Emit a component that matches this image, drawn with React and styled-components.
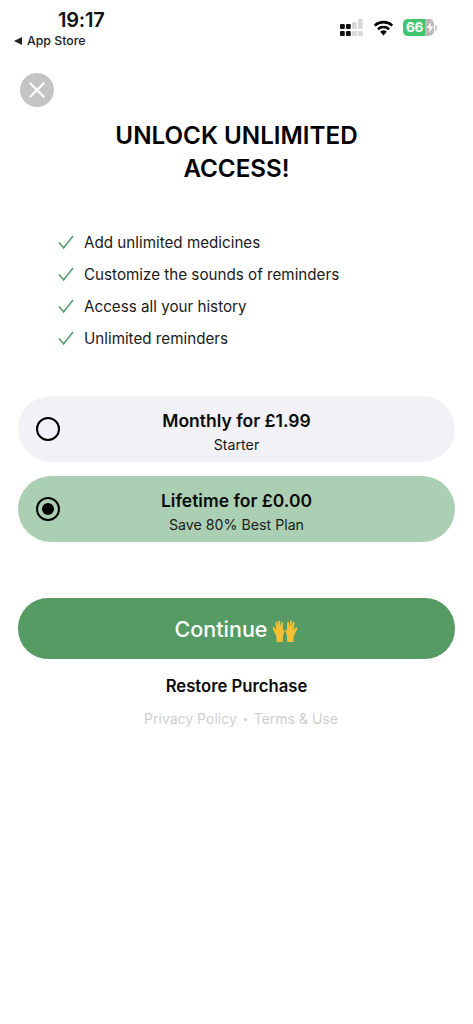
import React from "react";
import styled, { createGlobalStyle } from "styled-components";

const benefits = [
  "Add unlimited medicines",
  "Customize the sounds of reminders",
  "Access all your history",
  "Unlimited reminders",
];

const plans = [
  { title: "Monthly for £1.99", note: "Starter", selected: false },
  { title: "Lifetime for £0.00", note: "Save 80% Best Plan", selected: true },
];

function CellBars() {
  const columns = [0, 6, 12, 18];
  return (
    <svg width="24" height="17" viewBox="0 0 24 17">
      {columns.map((x, i) => (
        <g key={x}>
          {i > 1 && (
            <rect x={x} y={i === 3 ? 0 : 3} width="4.6" height={i === 3 ? 10 : 7} rx="1" fill="#d8d8d8" />
          )}
          {i < 2 && <rect x={x} y="5" width="4.8" height="5" rx="1" fill="#111" />}
          <rect x={x} y="12" width="4.8" height="5" rx="1" fill={i < 2 ? "#111" : "#d8d8d8"} />
        </g>
      ))}
    </svg>
  );
}

function Wifi() {
  return (
    <svg width="21" height="16" viewBox="0 0 21 16">
      <path d="M10.5 15.5 L7.2 11.7 A5 5 0 0 1 13.8 11.7 Z" fill="#000" />
      <path d="M4.9 9.2 A8.4 8.4 0 0 1 16.1 9.2" fill="none" stroke="#000" strokeWidth="2.5" />
      <path d="M1.7 5.6 A13 13 0 0 1 19.3 5.6" fill="none" stroke="#000" strokeWidth="2.6" />
    </svg>
  );
}

function Check() {
  return (
    <svg width="16" height="14" viewBox="0 0 16 14">
      <path d="M1 7.4 L5.6 13 L15 1" fill="none" stroke="#4f9a68" strokeWidth="1.5" />
    </svg>
  );
}

function RaisedHands() {
  return (
    <svg width="26" height="28" viewBox="0 0 26 28">
      <path
        d="M4.6 27 L4.2 21 L0.8 14 Q0.2 12.2 1.8 12 L4.4 15 L3.4 7.6 Q4 6.2 5.2 7 L6.2 12 L6.2 6 Q7 4.8 8 6 L8.4 12 L9.2 7.4 Q10.4 6.6 10.8 8 L11 16 L11.8 14.6 Q12.8 14.8 12.4 16.4 L11 21 L10.8 27 Z"
        fill="#f7c034"
      />
      <path
        d="M21.4 27 L21.8 21 L25.2 14 Q25.8 12.2 24.2 12 L21.6 15 L22.6 7.6 Q22 6.2 20.8 7 L19.8 12 L19.8 6 Q19 4.8 18 6 L17.6 12 L16.8 7.4 Q15.6 6.6 15.2 8 L15 16 L14.2 14.6 Q13.2 14.8 13.6 16.4 L15 21 L15.2 27 Z"
        fill="#f7c034"
      />
      <path d="M8.6 3.4 L8.4 1.8 M12 3 L12 1 M14 3 L14 1 M17.4 3.4 L17.6 1.8" stroke="#6d7f66" strokeWidth="0.9" />
    </svg>
  );
}

export default function App() {
  return (
    <Page>
      <GlobalStyle />
      <StatusBar>
        <StatusLeft>
          <Time>19:17</Time>
          <BackLink>
            <BackArrow />
            App Store
          </BackLink>
        </StatusLeft>
        <StatusRight>
          <CellBars />
          <Wifi />
          <Battery>
            <BatteryBody>
              <BatteryFill>66</BatteryFill>
              <Bolt>
                <svg width="8" height="11" viewBox="0 0 8 11">
                  <path d="M5 0 L0.5 6 H3.5 L2.8 11 L7.5 4.6 H4.4 Z" fill="#fff" />
                </svg>
              </Bolt>
            </BatteryBody>
            <BatteryTip />
          </Battery>
        </StatusRight>
      </StatusBar>

      <CloseButton aria-label="Close">
        <svg width="16" height="16" viewBox="0 0 16 16">
          <path d="M1.5 1.5 L14.5 14.5 M14.5 1.5 L1.5 14.5" stroke="#fff" strokeWidth="2.4" strokeLinecap="round" />
        </svg>
      </CloseButton>

      <Title>
        UNLOCK UNLIMITED
        <br />
        ACCESS!
      </Title>

      <BenefitList>
        {benefits.map((text) => (
          <Benefit key={text}>
            <Check />
            {text}
          </Benefit>
        ))}
      </BenefitList>

      <PlanList>
        {plans.map((plan) => (
          <Plan key={plan.title} $selected={plan.selected}>
            <Radio $selected={plan.selected} />
            <PlanTitle>{plan.title}</PlanTitle>
            <PlanNote>{plan.note}</PlanNote>
          </Plan>
        ))}
      </PlanList>

      <ContinueButton>
        Continue
        <RaisedHands />
      </ContinueButton>

      <Restore>Restore Purchase</Restore>

      <LegalRow>
        <span>Privacy Policy</span>
        <LegalDot />
        <span>Terms &amp; Use</span>
      </LegalRow>
    </Page>
  );
}

const GlobalStyle = createGlobalStyle`
  html, body {
    margin: 0;
    padding: 0;
    background: #fff;
  }
  body {
    font-family: Inter, "Noto Sans", sans-serif;
    color: #000;
  }
`;

const Page = styled.div`
  width: 473px;
  height: 1024px;
  box-sizing: border-box;
  overflow: hidden;
  display: flex;
  flex-direction: column;
  background: #fff;
`;

const StatusBar = styled.div`
  height: 73px;
  box-sizing: border-box;
  padding: 9px 36px 0 14px;
  display: flex;
  justify-content: space-between;
  align-items: flex-start;
  flex-shrink: 0;
`;

const StatusLeft = styled.div`
  display: flex;
  flex-direction: column;
  align-items: flex-start;
`;

const Time = styled.div`
  margin-left: 44px;
  font-size: 20px;
  line-height: 23px;
  font-weight: 600;
  letter-spacing: -0.2px;
  color: #111;
`;

const BackLink = styled.div`
  margin-top: 1px;
  display: flex;
  align-items: center;
  gap: 5px;
  font-size: 12.3px;
  line-height: 16px;
  font-weight: 500;
  color: #222;
`;

const BackArrow = styled.span`
  width: 0;
  height: 0;
  border-top: 4px solid transparent;
  border-bottom: 4px solid transparent;
  border-right: 8px solid #222;
`;

const StatusRight = styled.div`
  margin-top: 10px;
  display: flex;
  align-items: center;
  gap: 9px;
`;

const Battery = styled.div`
  display: flex;
  align-items: center;
  gap: 1px;
`;

const BatteryBody = styled.div`
  width: 31px;
  height: 17px;
  border-radius: 5px;
  overflow: hidden;
  background: #b9b9b9;
  display: flex;
`;

const BatteryFill = styled.div`
  width: 21px;
  padding-left: 1px;
  background: #3fc56b;
  color: #fff;
  font-size: 13.5px;
  line-height: 17px;
  font-weight: 700;
  letter-spacing: -0.2px;
  text-align: center;
`;

const Bolt = styled.div`
  flex: 1;
  display: flex;
  align-items: center;
  justify-content: center;
`;

const BatteryTip = styled.div`
  width: 2px;
  height: 6px;
  border-radius: 0 2px 2px 0;
  background: #c4c4c4;
`;

const CloseButton = styled.button`
  width: 34px;
  height: 34px;
  margin-left: 20px;
  padding: 0;
  border: none;
  border-radius: 50%;
  background: #c4c4c4;
  display: flex;
  align-items: center;
  justify-content: center;
  flex-shrink: 0;
`;

const Title = styled.h1`
  margin: 12px 0 0;
  font-size: 24.2px;
  line-height: 33px;
  font-weight: 600;
  text-align: center;
  color: #000;
`;

const BenefitList = styled.ul`
  list-style: none;
  margin: 46px 0 0;
  padding: 0 0 0 58px;
  display: flex;
  flex-direction: column;
  gap: 10px;
`;

const Benefit = styled.li`
  height: 22px;
  display: flex;
  align-items: center;
  gap: 10px;
  font-size: 15.2px;
  font-weight: 400;
  color: #1a1a1a;
`;

const PlanList = styled.div`
  margin: 47px 18px 0;
  display: flex;
  flex-direction: column;
  gap: 14px;
`;

const Plan = styled.div`
  position: relative;
  height: 66px;
  box-sizing: border-box;
  padding-top: 14px;
  border-radius: 33px;
  background: ${(props) => (props.$selected ? "#abcfb2" : "#f1f1f6")};
  display: flex;
  flex-direction: column;
  align-items: center;
`;

const Radio = styled.span`
  position: absolute;
  left: 18px;
  top: 21px;
  width: 24px;
  height: 24px;
  box-sizing: border-box;
  border: 2px solid #000;
  border-radius: 50%;
  padding: 4px;
  background-clip: content-box;
  background-color: ${(props) => (props.$selected ? "#000" : "transparent")};
`;

const PlanTitle = styled.div`
  font-size: 17.5px;
  line-height: 22px;
  font-weight: 600;
  color: #0b0b0b;
`;

const PlanNote = styled.div`
  margin-top: 4px;
  font-size: 14.2px;
  line-height: 18px;
  color: #1a1a1a;
`;

const ContinueButton = styled.button`
  height: 61px;
  margin: 56px 18px 0;
  padding: 0;
  border: none;
  border-radius: 30px;
  background: #559b63;
  color: #fff;
  font-family: inherit;
  font-size: 21.5px;
  font-weight: 500;
  display: flex;
  align-items: center;
  justify-content: center;
  gap: 5px;
  flex-shrink: 0;
`;

const Restore = styled.div`
  margin-top: 17px;
  font-size: 16.7px;
  line-height: 20px;
  font-weight: 600;
  text-align: center;
  color: #0b0b0b;
`;

const LegalRow = styled.div`
  margin-top: 14px;
  padding-left: 9px;
  display: flex;
  justify-content: center;
  align-items: center;
  gap: 7px;
  font-size: 14px;
  line-height: 18px;
  color: #cfcfcf;
`;

const LegalDot = styled.span`
  width: 3px;
  height: 3px;
  border-radius: 50%;
  background: #cfcfcf;
`;
